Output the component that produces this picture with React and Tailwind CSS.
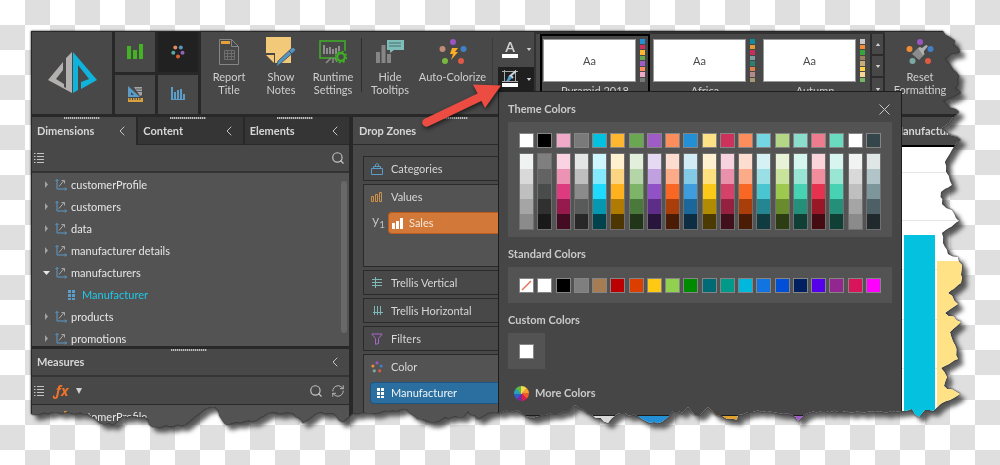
import { ChevronLeft, Search, RefreshCw } from "lucide-react";
import { clsx } from "clsx";

// Outline of the torn sheet, in sheet coordinates offset by SHEET_ORIGIN.
const SHEET_ORIGIN = 31;
const SHEET_WIDTH = 933;
const SHEET_HEIGHT = 397;
const TORN_EDGE = [
  [943, 31], [949, 37], [955, 41], [953, 45], [958, 48], [960, 52], [952, 53], [945, 58], [947, 62], [950, 65],
  [953, 70], [959, 76], [957, 80], [958, 84], [955, 88], [961, 93], [953, 97], [943, 101], [947, 105], [959, 112],
  [953, 117], [949, 123], [941, 129], [947, 133], [961, 140], [955, 145], [952, 150], [945, 162], [946, 172], [952, 185],
  [941, 192], [942, 204], [952, 210], [959, 221], [942, 233], [943, 243], [948, 254], [958, 257], [962, 265], [961, 283],
  [948, 293], [958, 304], [945, 313], [961, 322], [950, 332], [955, 345], [958, 359], [941, 368], [947, 377], [944, 386],
  [960, 394], [950, 400], [942, 403], [933, 411], [925, 410], [919, 417], [912, 409], [903, 411], [895, 412], [875, 412],
  [842, 412], [822, 411], [808, 413], [804, 415], [798, 421], [792, 415], [778, 413], [767, 411], [748, 412], [738, 415],
  [737, 420], [727, 419], [716, 415], [708, 407], [700, 415], [695, 415], [688, 407], [682, 413], [673, 411], [668, 417],
  [662, 422], [650, 423], [638, 416], [620, 413], [612, 418], [608, 423], [592, 415], [585, 410], [575, 405], [567, 412],
  [545, 415], [532, 418], [522, 414], [518, 410], [488, 413], [478, 419], [468, 411], [463, 417], [445, 417], [435, 422],
  [418, 419], [407, 409], [388, 411], [372, 413], [353, 413], [343, 422], [333, 413], [317, 413], [303, 423], [293, 413],
  [268, 413], [257, 420], [225, 424], [215, 407], [207, 408], [197, 415], [185, 425], [153, 427], [145, 417], [123, 416],
  [113, 425], [100, 423], [88, 414], [53, 412], [40, 414], [31, 414],
];

// Splits every segment a few times and nudges the new points, so the edge reads as torn paper.
function roughen(points) {
  const out = [];
  points.forEach(([x, y], i) => {
    out.push([x, y]);
    const next = points[i + 1];
    if (!next) return;
    const steps = Math.floor(Math.hypot(next[0] - x, next[1] - y) / 4);
    for (let s = 1; s < steps; s += 1) {
      const t = s / steps;
      const nudge = Math.sin((i + 1) * 7.3 + s * 4.1);
      out.push([x + (next[0] - x) * t + nudge * 0.8, y + (next[1] - y) * t - nudge]);
    }
  });
  return out;
}

const TORN_PATH = `M31 31 ${roughen(TORN_EDGE)
  .map(([x, y]) => `L${x.toFixed(1)} ${y.toFixed(1)}`)
  .join(" ")} Z`;

const DIMENSIONS = [
  { name: "customerProfile" },
  { name: "customers" },
  { name: "data" },
  { name: "manufacturer details" },
  { name: "manufacturers", children: ["Manufacturer"] },
  { name: "products" },
  { name: "promotions" },
];

const THEMES = [
  {
    name: "Pyramid 2018",
    colors: ["#238fd5", "#cc325c", "#ffb732", "#69a850", "#9f5cc6", "#fb8e5c", "#f0a9c9", "#7a7a7a"],
  },
  {
    name: "Africa",
    colors: ["#118a9c", "#e39a35", "#c42f5b", "#7e9ea3", "#2f7f6e", "#e0804e", "#b48a8f", "#a59a72"],
  },
  {
    name: "Autumn",
    colors: ["#c9c9c9", "#f58b35", "#36a63c", "#98805f", "#c9ac79", "#ffd24a", "#f6d596", "#75b563"],
  },
];

const THEME_COLORS = [
  ["#ffffff", "#f1f3f3", "#d9d9d9", "#bfbfbf", "#a5a5a5", "#8b8b8b"],
  ["#000000", "#7f7f7f", "#636363", "#4a4c4c", "#303030", "#191919"],
  ["#f0a9c9", "#f9d3e1", "#ec93b4", "#de3a80", "#971a4e", "#430c22"],
  ["#7a7a7a", "#e4e5e5", "#bfbfbf", "#8b8b8b", "#595b5b", "#282828"],
  ["#04c1e0", "#cdf6ff", "#84e9fc", "#1fdafc", "#0798b1", "#02424d"],
  ["#ffb732", "#fff0cf", "#fcd583", "#ffb11e", "#b17a02", "#4d3602"],
  ["#69a850", "#e1efdb", "#b4d5a8", "#7db468", "#4b783b", "#213519"],
  ["#9f5cc6", "#e6d9f3", "#c1a0e0", "#9052c6", "#5d2d87", "#29143b"],
  ["#fb8e5c", "#fdddd0", "#fbab88", "#f86824", "#a93e0b", "#4a1b05"],
  ["#238fd5", "#d2ecf5", "#83cae6", "#3f9ddd", "#1c6799", "#0c2d43"],
  ["#ffe285", "#fff0cf", "#fee081", "#fbc918", "#b18b02", "#4b3a02"],
  ["#cc325c", "#f6d3df", "#ea91ab", "#d44269", "#93213f", "#41101d"],
  ["#fb8e5c", "#fdddd0", "#fbab88", "#f86824", "#a93e0b", "#4a1b05"],
  ["#74d6e3", "#d5f1f4", "#99dfe5", "#49c6d0", "#248690", "#103b40"],
  ["#b4d785", "#e7f2d7", "#c8e39b", "#9dca4e", "#688b2c", "#2d3d13"],
  ["#8bdecb", "#d5f5ef", "#99e5d5", "#47d2b3", "#24907a", "#103f35"],
  ["#ec7c8e", "#fbd4da", "#f28d9d", "#e5334f", "#991828", "#440b12"],
  ["#69dcc0", "#d5f5ee", "#99e6d4", "#47d2b3", "#24907a", "#103f35"],
  ["#ffffff", "#f1f3f3", "#d9d9d9", "#bfbfbf", "#a5a5a5", "#8b8b8b"],
  ["#35464a", "#e0e5e6", "#b1c4c8", "#7c969c", "#4c6066", "#20292b"],
];

const STANDARD_COLORS = [
  "none", "#ffffff", "#000000", "#7f7f7f", "#a67c52", "#ba0000", "#dc3e00", "#fdc912", "#92d050", "#008a00",
  "#006a75", "#00998a", "#00b8dc", "#1174e0", "#004fd6", "#002060", "#5400eb", "#92278f", "#d8145b", "#ff00ff",
];

function Grip({ className }) {
  return (
    <span
      aria-hidden="true"
      className={clsx(
        "absolute top-0 h-0.5 w-9 bg-[repeating-linear-gradient(90deg,#bdbdbd_0_1px,#6a6a6a_1px_2px)]",
        className
      )}
    />
  );
}

function Logo() {
  return (
    <svg viewBox="0 0 49 42" className="h-[42px] w-[49px]" aria-label="Pyramid" role="img">
      <path d="M24 0V41L0 28 15 10v8L8 27l8 5v3l2 1V6z" fill="#b3b1b0" />
      <path d="M25 0 49 28 33 37v-7l8-3L30 13v25l-5 3z" fill="#0fb3dc" />
    </svg>
  );
}

function BarsIcon({ color, className }) {
  return (
    <svg viewBox="0 0 16 16" className={className} fill={color} aria-hidden="true">
      <path d="M0 2h4v13H0zM6 6h4v9H6zM12 0h4v15h-4z" />
    </svg>
  );
}

function DotsIcon({ className }) {
  return (
    <svg viewBox="0 0 14 14" className={className} aria-hidden="true">
      <circle cx="4.3" cy="2.4" r="2" fill="#e38b63" />
      <circle cx="9.8" cy="2.4" r="2" fill="#5b96bf" />
      <circle cx="2.3" cy="7.8" r="2" fill="#5ba8a5" />
      <circle cx="11.5" cy="7.8" r="2" fill="#9264b9" />
      <circle cx="7" cy="11.4" r="2" fill="#dc6133" />
    </svg>
  );
}

function ColorZoneIcon() {
  return (
    <svg viewBox="0 0 12 12" className="h-3 w-3" aria-hidden="true">
      <circle cx="6" cy="1.800" r="1.600" fill="#9a57c2" />
      <circle cx="1.900" cy="5" r="1.600" fill="#f08b38" />
      <circle cx="10.100" cy="5" r="1.600" fill="#4180c4" />
      <circle cx="3.300" cy="9.800" r="1.600" fill="#7ca9a2" />
      <circle cx="8.700" cy="9.800" r="1.600" fill="#dd5a44" />
    </svg>
  );
}

function DesignIcon() {
  return (
    <svg viewBox="0 0 15 16" className="h-4 w-[15px]" aria-hidden="true">
      <path d="M0 0 12 11H0zM3 6v3h3z" fill="#5b9cc9" fillRule="evenodd" />
      <path d="M6 1h8v8l-2 1z" fill="#a4a4a4" />
      <path d="M8 3h6M9 5.5h5" stroke="#5a5a5a" strokeWidth="1" />
      <path d="M0 12h15v4H0z" fill="#d9a03f" />
      <path d="M2 12v2M4.500 12v2M7 12v2M9.500 12v2M12 12v2" stroke="#484848" strokeWidth="1" />
    </svg>
  );
}

function HistogramIcon() {
  return (
    <svg viewBox="0 0 14 14" className="h-3.5 w-3.5" fill="#5b9cc9" aria-hidden="true">
      <path d="M0 0h2v13H0zM3 5h2v8H3zM6 3h2v10H6zM9 2h2v11H9zM12 7h2v6h-2zM0 12h14v1H0z" />
    </svg>
  );
}

function ReportIcon() {
  return (
    <svg viewBox="0 0 20 26" className="h-[26px] w-5" fill="none" stroke="#858585" aria-hidden="true">
      <path d="M.5.5h12l7 7v18H.5zM12.500.5v7h7" />
      <path d="M2 3.500h9" stroke="#e3a03c" strokeWidth="3" />
      <path d="M5.500 11.500h10v9h-10zM5.500 14.500h10M5.500 17.500h10M8.500 11v10M12.500 11v10" stroke="#6e6e6e" />
    </svg>
  );
}

function NotesIcon() {
  return (
    <svg viewBox="0 0 30 30" className="h-[30px] w-[30px]" aria-hidden="true">
      <path d="M0 0h25v26H9V16H0z" fill="#f2c879" />
      <path d="M0 18h8v8z" fill="#f2c879" />
      <path d="m27 10 3 3-16 14-4 3 2-6z" fill="#5295c5" stroke="#484848" strokeWidth=".8" />
      <path d="m23 14 3 3" stroke="#484848" />
    </svg>
  );
}

function RuntimeIcon() {
  return (
    <svg viewBox="0 0 28 24" className="h-6 w-7" fill="none" aria-hidden="true">
      <path d="M17 18H1V1h25v10" stroke="#3fb024" strokeWidth="1.500" />
      <path d="M5 5v9M8 8v6M11 7v7M14 9v5M17 8v6M20 6v5" stroke="#8d8d8d" strokeWidth="2" />
      <path d="m12 18-5 5M14 18v5M16 18l2 4" stroke="#8d8d8d" strokeWidth="1.500" />
      <circle cx="22" cy="17" r="3.800" stroke="#3fb024" strokeWidth="2.200" />
      <circle cx="22" cy="17" r="5.500" stroke="#3fb024" strokeWidth="1.500" strokeDasharray="2.200 2.100" />
    </svg>
  );
}

function TooltipIcon() {
  return (
    <svg viewBox="0 0 30 24" className="h-6 w-[30px]" aria-hidden="true">
      <path d="M1 12h4v11H1zM6.500 5h4v18h-4zM12 14h4v9h-4z" fill="#868686" />
      <path d="M12 0h17v10H19l-4 3v-3h-3z" fill="#7fbdb9" />
      <path d="M14 3h12M14 6h12" stroke="#4b6f6d" />
    </svg>
  );
}

function ColorizeIcon() {
  return (
    <svg viewBox="0 0 28 26" className="h-[26px] w-7" aria-hidden="true">
      <circle cx="14" cy="3" r="3" fill="#9a57c2" />
      <circle cx="3.500" cy="10" r="3" fill="#c08a74" />
      <circle cx="24.500" cy="10" r="3" fill="#4180c4" />
      <circle cx="6" cy="22" r="3" fill="#79b83f" />
      <circle cx="22" cy="22" r="3" fill="#dd5a44" />
      <path d="M13 9h6l-3 4h3l-7 8 2-6h-3z" fill="#fbad24" />
    </svg>
  );
}

function ResetIcon() {
  return (
    <svg viewBox="0 0 28 26" className="h-[26px] w-7" aria-hidden="true">
      <circle cx="14" cy="3" r="3" fill="#9a57c2" />
      <circle cx="3.500" cy="10" r="3" fill="#f08b38" />
      <circle cx="24.500" cy="10" r="3" fill="#4180c4" />
      <circle cx="6.500" cy="22" r="3" fill="#7ca9a2" />
      <circle cx="22" cy="22" r="3" fill="#dd5a44" />
      <path d="m6 15 6-6 7 6-6 6z" fill="#8b8b8b" />
      <path d="m12 9 2-1 2 1 4-3 2 1-4 5v3l-1 1z" fill="#b0b0b0" />
    </svg>
  );
}

function AxisIcon() {
  return (
    <svg viewBox="0 0 12 12" className="h-3 w-3 shrink-0" fill="none" aria-hidden="true">
      <path d="M2 .5v9.500h9.500M.5 2 2 .5 3.500 2M10 8.500l1.500 1.500-1.500 1.500" stroke="#5b9cc9" />
      <path d="m4 7.500 5-6M6.500 1.500h3v3" stroke="#a9a9a9" />
    </svg>
  );
}

function GridIcon({ color }) {
  return (
    <svg viewBox="0 0 8 12" className="h-3 w-2 shrink-0" fill={color} aria-hidden="true">
      <path d="M0 1h3v3H0zM4 1h3v3H4zM0 5h3v3H0zM4 5h3v3H4zM0 9h3v2H0zM4 9h3v2H4z" />
    </svg>
  );
}

function ListIcon() {
  return (
    <svg viewBox="0 0 10 10" className="h-2.5 w-2.5" stroke="#c4c4c4" aria-hidden="true">
      <path d="M0 .5h1.500M3 .5h7M0 3.500h1.500M3 3.500h7M0 6.500h1.500M3 6.500h7M0 9.500h1.500M3 9.500h7" />
    </svg>
  );
}

function Caret({ up }) {
  return (
    <svg viewBox="0 0 6 4" className="h-[3px] w-1.5" fill="#d0d0d0" aria-hidden="true">
      <path d={up ? "M0 4h6L3 0z" : "M0 0h6L3 4z"} />
    </svg>
  );
}

function RibbonButton({ icon, lines, className }) {
  return (
    <button
      type="button"
      className={clsx("flex shrink-0 flex-col items-center leading-[13px]", className)}
    >
      <span className="flex h-9 items-center">{icon}</span>
      {lines.map((line) => (
        <span key={line} className="whitespace-nowrap">
          {line}
        </span>
      ))}
    </button>
  );
}

function PanelTab({ title, active }) {
  return (
    <div
      className={clsx(
        "relative flex flex-1 items-center justify-between pl-[5px] pr-1.5",
        active ? "bg-[#484848]" : "border-b border-[#2a2a2a] bg-[#353535]"
      )}
    >
      <Grip className="left-8" />
      <h2 className="font-bold text-[#d6d6d6]">{title}</h2>
      <button type="button" aria-label={`Collapse ${title}`}>
        <ChevronLeft className="h-4 w-4 text-[#c4c4c4]" strokeWidth={1.5} />
      </button>
    </div>
  );
}

function TreeItem({ item }) {
  const open = Boolean(item.children);
  return (
    <li>
      <button type="button" className="flex h-[22px] items-center gap-1 pl-[11px]" aria-expanded={open}>
        <svg viewBox="0 0 8 8" className="h-2 w-2" aria-hidden="true">
          {open ? <path d="M0 2h7L3.500 6z" fill="#e6e6e6" /> : <path d="M2 0v7l3-3.500z" fill="#a3a3a3" />}
        </svg>
        <AxisIcon />
        <span>{item.name}</span>
      </button>
      {open && (
        <ul>
          {item.children.map((child) => (
            <li key={child} className="flex h-[22px] items-center gap-1.5 pl-9 text-[#1fc9ea]">
              <GridIcon color="#5b9cc9" />
              {child}
            </li>
          ))}
        </ul>
      )}
    </li>
  );
}

function LeftPanels() {
  return (
    <div className="flex w-[317px] shrink-0 flex-col">
      <div className="flex h-7 gap-0.5">
        <PanelTab title="Dimensions" active />
        <PanelTab title="Content" />
        <PanelTab title="Elements" />
      </div>
      <div className="flex h-7 items-center justify-between border-b-2 border-[#333] bg-[#484848] pl-0.5 pr-1">
        <button type="button" aria-label="List view">
          <ListIcon />
        </button>
        <button type="button" aria-label="Search dimensions">
          <Search className="h-3.5 w-3.5 text-[#c4c4c4]" />
        </button>
      </div>
      <div className="relative h-[173px] overflow-hidden bg-[#535353] pt-px">
        <ul>
          {DIMENSIONS.map((item) => (
            <TreeItem key={item.name} item={item} />
          ))}
        </ul>
        <span className="absolute right-0.5 top-2 h-[152px] w-1.5 rounded-sm bg-[#686868]" />
      </div>
      <div className="relative mt-[3px] flex h-7 items-center justify-between border-b-2 border-[#353535] bg-[#484848] pl-[5px] pr-1.5">
        <Grip className="left-[139px]" />
        <h2 className="font-bold text-[#d6d6d6]">Measures</h2>
        <button type="button" aria-label="Collapse Measures">
          <ChevronLeft className="h-4 w-4 text-[#c4c4c4]" strokeWidth={1.5} />
        </button>
      </div>
      <div className="flex h-7 items-center gap-2 border-b border-[#2a2a2a] bg-[#484848] pl-0.5 pr-1">
        <button type="button" aria-label="List view">
          <ListIcon />
        </button>
        <button type="button" className="flex items-center gap-2 pl-0.5" aria-label="Formula">
          <span className="font-['Noto_Sans',sans-serif] text-sm font-bold italic leading-4 text-[#f07428]">
            ƒx
          </span>
          <svg viewBox="0 0 6 6" className="h-1.5 w-1.5" fill="#d0d0d0" aria-hidden="true">
            <path d="M0 0h6L3 6z" />
          </svg>
        </button>
        <span className="flex-1" />
        <button type="button" aria-label="Search measures">
          <Search className="h-3.5 w-3.5 text-[#c4c4c4]" />
        </button>
        <button type="button" aria-label="Refresh">
          <RefreshCw className="h-3.5 w-3.5 text-[#c4c4c4]" strokeWidth={1.5} />
        </button>
      </div>
      <div className="flex h-[23px] items-center gap-1 bg-[#535353] pl-[23px]">
        <BarsIcon color="#d58a3a" className="h-3 w-3" />
        <span>customerProfile</span>
      </div>
    </div>
  );
}

function Zone({ icon, label, active, className, children }) {
  return (
    <section
      className={clsx("border border-[#2a2a2a]", active ? "bg-[#535353]" : "bg-[#484848]", className)}
    >
      <h3 className="flex h-[23px] items-center gap-2 pl-[7px] text-[#d6d6d6]">
        <span className="flex w-3 justify-center">{icon}</span>
        {label}
      </h3>
      {children}
    </section>
  );
}

function DropZones() {
  return (
    <div className="ml-1 flex w-[147px] shrink-0 flex-col bg-[#484848]">
      <div className="relative flex h-7 shrink-0 items-center border-b border-[#2a2a2a] pl-1.5">
        <Grip className="left-[79px]" />
        <h2 className="font-bold text-[#d6d6d6]">Drop Zones</h2>
      </div>
      <div className="flex flex-1 flex-col gap-[3px] pl-2.5 pt-[11px]">
        <Zone
          label="Categories"
          icon={
            <svg viewBox="0 0 12 12" className="h-3 w-3" fill="none" stroke="#5b9cc9" aria-hidden="true">
              <path d="M.5 5.500h11v6H.5zM2.500 5V3.500h7V5M4.500 3V1.500L6 .5l1.500 1V3" />
            </svg>
          }
        />
        <Zone
          label="Values"
          active
          className="h-[83px]"
          icon={
            <svg viewBox="0 0 12 12" className="h-3 w-3" fill="none" stroke="#cf9248" aria-hidden="true">
              <path d="M.5 5.500h2v5h-2zM4.500 3.500h2v7h-2zM8.500 1.500h2v9h-2z" />
            </svg>
          }
        >
          <div className="flex items-start pl-2 pt-1">
            <span className="w-4 shrink-0 text-sm leading-4 text-[#bdbdbd]">
              y<sub className="text-[10px]">1</sub>
            </span>
            <div className="flex h-[22px] flex-1 items-center gap-1.5 rounded-l border border-r-0 border-[#bd5a1e] bg-[#d27839] pl-[3px] text-[#f4e6da]">
              <svg viewBox="0 0 11 11" className="h-[11px] w-[11px]" fill="#fff" aria-hidden="true">
                <path d="M0 5h3v6H0zM4 3h3v8H4zM8 0h3v11H8z" />
              </svg>
              Sales
            </div>
          </div>
        </Zone>
        <Zone
          label="Trellis Vertical"
          icon={
            <svg viewBox="0 0 11 11" className="h-[11px] w-[11px]" stroke="#7db8b4" aria-hidden="true">
              <path d="M0 2.500h10M0 5.500h10M0 8.500h10M3.500 0v11" />
            </svg>
          }
        />
        <Zone
          label="Trellis Horizontal"
          icon={
            <svg viewBox="0 0 11 11" className="h-[11px] w-[11px]" stroke="#7db8b4" aria-hidden="true">
              <path d="M2.500 1v9M5.500 1v9M8.500 1v9M1 7.500h10" />
            </svg>
          }
        />
        <Zone
          label="Filters"
          icon={
            <svg viewBox="0 0 12 12" className="h-3 w-3" fill="none" stroke="#a966c9" aria-hidden="true">
              <path d="M.8 1h10.400L7.500 5.500v5l-3 .8V5.500z" />
            </svg>
          }
        />
        <Zone label="Color" active className="flex-1 border-b-0" icon={<ColorZoneIcon />}>
          <div className="ml-1.5 mt-1 flex h-[22px] items-center gap-1.5 rounded-l border border-r-0 border-[#1c5581] bg-[#2a6f9f] pl-1.5 text-[#eef4f8]">
            <GridIcon color="#ffffff" />
            Manufacturer
          </div>
        </Zone>
      </div>
    </div>
  );
}

function ChartCanvas() {
  return (
    <div className="flex min-w-0 flex-1 flex-col bg-white">
      <div className="flex h-[30px] items-center justify-end border-b-2 border-black bg-[#484848] pr-1">
        <h2 className="font-bold text-[#d6d6d6]">Manufacturer</h2>
      </div>
      <svg viewBox="0 0 465 281" className="h-[281px] w-full" preserveAspectRatio="xMaxYMin slice" aria-label="Sales by manufacturer" role="img">
        <path d="M0 25.500h465M0 73.500h465M0 122.500h465M0 172.500h465M0 221.500h465" stroke="#e6e6e6" />
        <path d="M405 88h31v193h-31z" fill="#04c1e0" />
        <path d="M438 114h27v167h-27z" fill="#ffe285" />
        <path d="M0 260h93v21H0z" fill="#535353" />
        <path d="M93 260h40v21H93z" fill="#d8d8d8" />
        <path d="M138 260h40v21h-40z" fill="#238fd5" />
        <path d="M210 260h28v21h-28z" fill="#e0a02c" />
        <path d="M282 260h30v21h-30z" fill="#9f5cc6" />
      </svg>
    </div>
  );
}

function Ribbon() {
  return (
    <header className="flex h-[86px] gap-[3px] border-b-[3px] border-[#282828] pt-px text-[#cfcfcf]">
      <div className="flex w-20 shrink-0 items-center justify-center bg-[#484848]">
        <Logo />
      </div>
      <nav className="grid w-[83px] shrink-0 grid-cols-2 grid-rows-2 gap-[3px]" aria-label="Modules">
        <button type="button" aria-label="Discover" className="flex items-center justify-center bg-[#484848]">
          <BarsIcon color="#43b223" className="h-4 w-4" />
        </button>
        <button type="button" aria-label="Formulate" className="flex items-center justify-center bg-[#212121]">
          <DotsIcon className="h-3.5 w-3.5" />
        </button>
        <button type="button" aria-label="Design" className="flex items-center justify-center bg-[#484848]">
          <DesignIcon />
        </button>
        <button type="button" aria-label="Histogram" className="flex items-center justify-center bg-[#484848]">
          <HistogramIcon />
        </button>
      </nav>
      <div className="flex min-w-0 flex-1 bg-[#484848]">
        <RibbonButton className="w-14 pt-0.5" icon={<ReportIcon />} lines={["Report", "Title"]} />
        <RibbonButton className="w-12 pt-0.5" icon={<NotesIcon />} lines={["Show", "Notes"]} />
        <RibbonButton className="w-14 pt-0.5" icon={<RuntimeIcon />} lines={["Runtime", "Settings"]} />
        <span className="mt-1.5 h-[54px] w-px bg-[#2e2e2e]" />
        <RibbonButton className="w-14 pt-0.5" icon={<TooltipIcon />} lines={["Hide", "Tooltips"]} />
        <RibbonButton className="w-[69px] pt-0.5" icon={<ColorizeIcon />} lines={["Auto-Colorize"]} />
        <span className="mx-[5px] mt-1.5 h-[46px] w-px bg-[#3a3a3a]" />
        <div className="flex w-9 shrink-0 flex-col justify-between pb-[23px] pt-2">
          <button type="button" aria-label="Font color" className="flex items-center gap-2 pl-1">
            <span className="flex w-4 flex-col items-center">
              <span className="text-sm font-bold leading-[14px]">A</span>
              <span className="h-1 w-4 bg-white" />
            </span>
            <Caret />
          </button>
          <button type="button" aria-label="Border color" className="flex h-6 items-center gap-2 bg-[#1f1f1f] pl-1">
            <svg viewBox="0 0 16 18" className="h-[18px] w-4" fill="none" aria-hidden="true">
              <path d="M2.500 0v12M13.500 0v12M0 1.500h16M0 11.500h16" stroke="#a9a9a9" />
              <path d="m14 1-7 6M9 6l2 2" stroke="#c9d7e0" strokeWidth="2" />
              <path d="m8 6 2 2-3 3H4c2-1 1-4 4-5z" fill="#4ba0d1" />
              <path d="M0 13h16v4H0z" fill="#fff" />
            </svg>
            <Caret />
          </button>
        </div>
        <div className="flex shrink-0 border-l-2 border-t-2 border-[#323232]">
          <div className="flex pl-1">
            {THEMES.map((theme, i) => (
              <button
                key={theme.name}
                type="button"
                className={clsx(
                  "flex w-[110px] flex-col items-center gap-px border-2 border-b-0 pt-[3px]",
                  i === 0 ? "border-black" : "border-transparent"
                )}
              >
                <span className="flex h-[43px] w-full gap-1 pl-px">
                  <span className="flex w-[93px] items-center justify-center border border-[#9a9a9a] bg-white text-[#4a4a4a]">
                    Aa
                  </span>
                  <span className="flex w-[5px] flex-col gap-px">
                    {theme.colors.map((color) => (
                      <span key={color} className="flex-1" style={{ backgroundColor: color }} />
                    ))}
                  </span>
                </span>
                <span>{theme.name}</span>
              </button>
            ))}
          </div>
          <div className="flex w-[15px] flex-col gap-0.5 border-x-2 border-[#2c2c2c] bg-[#2c2c2c]">
            <button type="button" aria-label="Previous themes" className="flex h-5 items-center justify-center bg-[#484848]">
              <Caret up />
            </button>
            <button type="button" aria-label="Next themes" className="flex h-5 items-center justify-center bg-[#484848]">
              <Caret />
            </button>
            <button type="button" aria-label="All themes" className="flex flex-1 items-start justify-center bg-[#484848] pt-2.5">
              <Caret />
            </button>
          </div>
        </div>
        <RibbonButton className="w-[70px] pt-0.5" icon={<ResetIcon />} lines={["Reset", "Formatting"]} />
      </div>
    </header>
  );
}

function Swatch({ color }) {
  return (
    <button
      type="button"
      aria-label={color}
      className="h-[15px] w-[15px] border border-[#858585]"
      style={{ backgroundColor: color === "none" ? "#ffffff" : color }}
    >
      {color === "none" && (
        <svg viewBox="0 0 13 13" className="h-[13px] w-[13px]" aria-hidden="true">
          <path d="M2 11 11 2" stroke="#e8705a" strokeWidth="1.400" />
        </svg>
      )}
    </button>
  );
}

function ColorPicker() {
  return (
    <div
      role="dialog"
      aria-label="Colors"
      className="absolute left-[467px] top-[60px] flex h-[325px] w-[404px] flex-col border border-[#1e1e1e] bg-[#464646] px-[9px] text-[#c9c9c9]"
    >
      <div className="flex h-[30px] items-center justify-between pr-0.5 pt-1">
        <h3 className="font-bold">Theme Colors</h3>
        <button type="button" aria-label="Close">
          <svg viewBox="0 0 11 11" className="h-[11px] w-[11px]" stroke="#c9c9c9" aria-hidden="true">
            <path d="m.5.5 10 10M10.500.5l-10 10" />
          </svg>
        </button>
      </div>
      <div className="flex h-[115px] justify-between bg-[#535353] px-[11px] pt-[11px]">
        {THEME_COLORS.map(([base, ...shades], i) => (
          <div key={i} className="flex flex-col gap-[5px]">
            <Swatch color={base} />
            <div className="flex w-[15px] flex-col border border-[#707070]">
              {shades.map((shade) => (
                <button
                  key={shade}
                  type="button"
                  aria-label={shade}
                  className="h-[15px]"
                  style={{ backgroundColor: shade }}
                />
              ))}
            </div>
          </div>
        ))}
      </div>
      <h3 className="flex h-[30px] items-center pt-1 font-bold">Standard Colors</h3>
      <div className="flex h-9 items-center justify-between bg-[#535353] px-[11px]">
        {STANDARD_COLORS.map((color) => (
          <Swatch key={color} color={color} />
        ))}
      </div>
      <h3 className="flex h-[30px] items-center pt-1 font-bold">Custom Colors</h3>
      <div className="flex h-9 w-[37px] items-center justify-center bg-[#535353]">
        <Swatch color="#ffffff" />
      </div>
      <button type="button" className="mt-4 flex items-center gap-1.5 pl-1.5 font-bold">
        <span className="h-[15px] w-[15px] rounded-full bg-[conic-gradient(#f6d84a_0_12%,#f5a030_12%_25%,#ee5a2c_25%_37%,#d81e4a_37%_50%,#7c2a9a_50%_62%,#2d5fc4_62%_75%,#2fa0b4_75%_87%,#5cb648_87%)]" />
        More Colors
      </button>
    </div>
  );
}

function PointerArrow() {
  return (
    <svg
      viewBox="0 0 90 52"
      className="pointer-events-none absolute left-[387px] top-[50px] h-[52px] w-[90px] drop-shadow-[1px_2px_2px_rgba(0,0,0,0.6)]"
      aria-hidden="true"
    >
      <path d="M8.500 41.500 62 16" stroke="#ec4c41" strokeWidth="8.500" strokeLinecap="round" />
      <path d="M55 3.500 83 4.500 67 27z" fill="#ec4c41" />
    </svg>
  );
}

export default function App() {
  return (
    <main className="min-h-screen overflow-hidden bg-white bg-[repeating-conic-gradient(#dfdfdf_0_25%,#ffffff_0_50%)] bg-[length:50px_50px] pl-[31px] pr-9 pt-[31px] font-['Lato','Open_Sans',sans-serif] text-[11px] leading-4 text-[#e6e6e6]">
      <svg width="0" height="0" className="absolute" aria-hidden="true">
        <clipPath id="torn" clipPathUnits="objectBoundingBox">
          <path
            d={TORN_PATH}
            transform={`scale(${1 / SHEET_WIDTH} ${1 / SHEET_HEIGHT}) translate(-${SHEET_ORIGIN} -${SHEET_ORIGIN})`}
          />
        </clipPath>
      </svg>
      <div className="[filter:drop-shadow(0_0_1px_#222)_drop-shadow(5px_5px_2px_rgba(40,40,40,0.75))]">
        <div className="relative overflow-hidden bg-[#282828] pl-px [clip-path:url(#torn)]">
          <Ribbon />
          <div className="flex">
            <LeftPanels />
            <DropZones />
            <ChartCanvas />
          </div>
          <ColorPicker />
          <PointerArrow />
        </div>
      </div>
    </main>
  );
}
